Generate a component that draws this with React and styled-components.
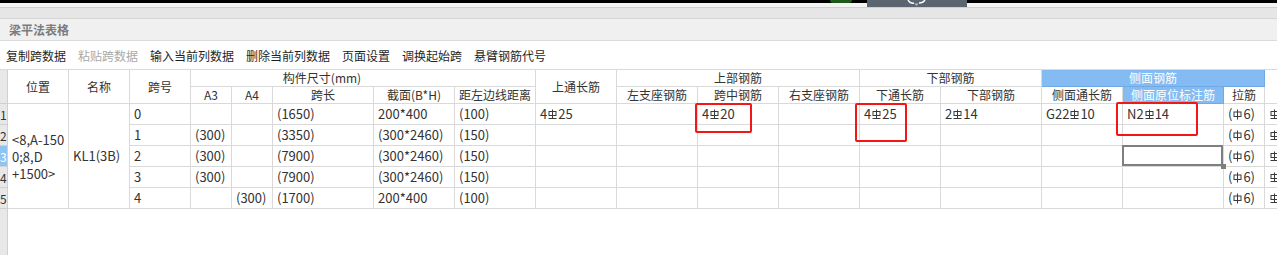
import React from "react";
import styled, { createGlobalStyle, css } from "styled-components";

//#region Styles
const GlobalStyle = createGlobalStyle`
  html, body {
    margin: 0;
    padding: 0;
    background: #fff;
  }
  body {
    font-family: "Noto Sans CJK SC", "Noto Sans", sans-serif;
    overflow: hidden;
  }
`;

const Page = styled.div`
  position: relative;
  width: 1277px;
  height: 255px;
  overflow: hidden;
  background: #fff;
`;

const TopStrip = styled.div`
  height: 7px;
  display: flex;
  align-items: flex-start;
  background: #f4f4f4;
  box-shadow: inset 0 3px 0 #000;
`;

const GreenBlob = styled.div`
  margin-left: 830px;
  width: 22px;
  height: 3px;
  background: #1c5a1c;
  border-radius: 0 0 6px 6px;
`;

const DarkTab = styled.div`
  margin-left: 15px;
  width: 100px;
  height: 7px;
  background: #5b6570;
  display: flex;
  justify-content: center;
`;

const TabBand = styled.div`
  height: 10px;
  background: #e6e6e6;
  border-top: 1px solid #cfcfcf;
  border-bottom: 1px solid #d6d6d6;
`;

const TitleBar = styled.div`
  height: 21px;
  line-height: 21px;
  padding-left: 9px;
  background: #f0f0f0;
  border-bottom: 1px solid #dadada;
  font-size: 12px;
  font-weight: 700;
  color: #7c7c7c;
`;

const Toolbar = styled.div`
  height: 28px;
  display: flex;
  align-items: center;
  gap: 12px;
  padding-left: 6px;
  font-size: 12px;
  color: #1f1f1f;
`;

const ToolItem = styled.span`
  color: ${(p) => (p.$disabled ? "#a9a9a9" : "#1f1f1f")};
`;

const TableArea = styled.div`
  height: 186px;
  background: linear-gradient(
    to right,
    #e8e8e8 0,
    #e8e8e8 7px,
    #d0d0d0 7px,
    #d0d0d0 8px,
    #fff 8px
  );
`;

const Grid = styled.div`
  display: grid;
  grid-template-columns:
    8px 61px 61px 61px 41px 41px 101px 81px 81px 81px 81px 81px
    81px 81px 101px 81px 101px 41px 60px;
  grid-template-rows: 17px 17px repeat(5, 21px);
  width: max-content;
  border-top: 1px solid #d9d9d9;
  background: #fff;
`;

const Cell = styled.div`
  position: relative;
  box-sizing: border-box;
  display: flex;
  align-items: center;
  justify-content: flex-start;
  padding: 0 4px;
  border-right: 1px solid #d9d9d9;
  border-bottom: 1px solid #d9d9d9;
  font-size: 13px;
  line-height: 16px;
  color: #333;
  white-space: nowrap;
  grid-column: span ${(p) => p.$cols || 1};
  grid-row: span ${(p) => p.$rows || 1};
  ${(p) =>
    p.$selected &&
    css`
      &::after {
        content: "";
        position: absolute;
        left: -1px;
        top: -1px;
        right: 0;
        bottom: 0;
        border: 2px solid #7f7f7f;
      }
      &::before {
        content: "";
        position: absolute;
        right: -3px;
        bottom: -3px;
        width: 5px;
        height: 5px;
        background: #7f7f7f;
        z-index: 1;
      }
    `}
`;

const HeadCell = styled(Cell)`
  justify-content: center;
  padding: 0 ${(p) => p.$shift || 0}px 0 0;
  font-size: 12px;
  ${(p) =>
    p.$blue &&
    css`
      background: #83bbf2;
      color: #fff;
      border-right-color: #6fa9e6;
      border-bottom-color: #6fa9e6;
    `}
`;

const ClipCell = styled(Cell)`
  overflow: hidden;
`;

const WrapCell = styled(Cell)`
  padding-left: 4px;
  padding-right: 0;
  line-height: 17px;
`;

const GutterCell = styled.div`
  box-sizing: border-box;
  display: flex;
  align-items: center;
  overflow: hidden;
  background: ${(p) => (p.$active ? "#8fc4f1" : "#e8e8e8")};
  color: ${(p) => (p.$active ? "#fff" : "#333")};
  border-right: 1px solid #d0d0d0;
  border-bottom: 1px solid #d0d0d0;
  font-size: 12px;
  padding-left: 0;
  grid-row: span ${(p) => p.$rows || 1};
`;

const RedMark = styled.div`
  position: absolute;
  left: ${(p) => p.$x}px;
  top: ${(p) => p.$y}px;
  width: ${(p) => p.$w}px;
  height: ${(p) => p.$h}px;
  box-sizing: border-box;
  border: 2px solid #f31616;
  border-radius: 2px;
  pointer-events: none;
`;

const Mark = styled.svg`
  width: 9px;
  height: 11px;
  margin: 0 1px;
  vertical-align: -1px;
  flex-shrink: 0;
`;
//#endregion Styles

function RebarMark({ grade }) {
  return (
    <Mark viewBox="0 0 9 11" fill="none" stroke="#3a3a3a" strokeWidth="1">
      {grade === 3 ? (
        <>
          <path d="M4.5 0.5 V9.5" />
          <rect x="1" y="2.5" width="7" height="4" />
          <path d="M0.5 9.5 H8.5" />
        </>
      ) : (
        <>
          <path d="M4.5 0.5 V10.5" />
          <rect x="1" y="3" width="7" height="4.5" />
        </>
      )}
    </Mark>
  );
}

const Bar = ({ pre = "", grade = 3, d = "" }) => (
  <span>
    {pre}
    <RebarMark grade={grade} />
    {d}
  </span>
);

const tie = (
  <span>
    (<RebarMark grade={1} />
    6)
  </span>
);
const ext = <RebarMark grade={3} />;

const rows = [
  ["0", "", "", "(1650)", "200*400", "(100)", <Bar pre="4" d="25" />, "", <Bar pre="4" d="20" />, "", <Bar pre="4" d="25" />, <Bar pre="2" d="14" />, <Bar pre="G22" d="10" />, <Bar pre="N2" d="14" />, tie, ext],
  ["1", "(300)", "", "(3350)", "(300*2460)", "(150)", "", "", "", "", "", "", "", "", tie, ext],
  ["2", "(300)", "", "(7900)", "(300*2460)", "(150)", "", "", "", "", "", "", "", "", tie, ext],
  ["3", "(300)", "", "(7900)", "(300*2460)", "(150)", "", "", "", "", "", "", "", "", tie, ext],
  ["4", "", "(300)", "(1700)", "200*400", "(100)", "", "", "", "", "", "", "", "", tie, ext],
];

const subHeads = [
  "A3",
  "A4",
  "跨长",
  "截面(B*H)",
  "距左边线距离",
  "左支座钢筋",
  "跨中钢筋",
  "右支座钢筋",
  "下通长筋",
  "下部钢筋",
  "侧面通长筋",
  "侧面原位标注筋",
  "拉筋",
];

const tools = [
  { label: "复制跨数据" },
  { label: "粘贴跨数据", disabled: true },
  { label: "输入当前列数据" },
  { label: "删除当前列数据" },
  { label: "页面设置" },
  { label: "调换起始跨" },
  { label: "悬臂钢筋代号" },
];

export default function App() {
  return (
    <>
      <GlobalStyle />
      <Page>
        <TopStrip>
          <GreenBlob />
          <DarkTab>
            <svg width="22" height="7" viewBox="0 0 22 7" fill="none">
              <path d="M2 0 Q4 4 8 3" stroke="#fff" strokeWidth="1.4" />
              <path d="M13 3 Q17 3 19 0" stroke="#fff" strokeWidth="1.4" />
              <path d="M8.5 3.5 H12.5 L10.5 6 Z" fill="#b9bec4" />
            </svg>
          </DarkTab>
        </TopStrip>
        <TabBand />
        <TitleBar>梁平法表格</TitleBar>
        <Toolbar>
          {tools.map((t) => (
            <ToolItem key={t.label} $disabled={t.disabled}>
              {t.label}
            </ToolItem>
          ))}
        </Toolbar>
        <TableArea>
          <Grid>
            <GutterCell $rows={2} />
            <HeadCell $rows={2}>位置</HeadCell>
            <HeadCell $rows={2}>名称</HeadCell>
            <HeadCell $rows={2}>跨号</HeadCell>
            <HeadCell $cols={5} $shift={82}>
              构件尺寸(mm)
            </HeadCell>
            <HeadCell $rows={2}>上通长筋</HeadCell>
            <HeadCell $cols={3}>上部钢筋</HeadCell>
            <HeadCell $cols={2}>下部钢筋</HeadCell>
            <HeadCell $cols={3} $blue>
              侧面钢筋
            </HeadCell>
            <HeadCell $rows={2} />
            {subHeads.map((h) => (
              <HeadCell key={h} $blue={h === "侧面原位标注筋"}>
                {h}
              </HeadCell>
            ))}

            {rows.map((row, i) => (
              <React.Fragment key={i}>
                <GutterCell $active={i === 2}>{i + 1}</GutterCell>
                {i === 0 && (
                  <>
                    <WrapCell $rows={5}>
                      <span>
                        &lt;8,A-150
                        <br />
                        0;8,D
                        <br />
                        +1500&gt;
                      </span>
                    </WrapCell>
                    <Cell $rows={5}>KL1(3B)</Cell>
                  </>
                )}
                {row.map((v, j) =>
                  j === row.length - 1 ? (
                    <ClipCell key={j}>{v}</ClipCell>
                  ) : (
                    <Cell key={j} $selected={i === 2 && j === 13}>
                      {v}
                    </Cell>
                  )
                )}
              </React.Fragment>
            ))}
          </Grid>
        </TableArea>
        <RedMark $x={695} $y={103} $w={57} $h={30} />
        <RedMark $x={855} $y={103} $w={52} $h={39} />
        <RedMark $x={1116} $y={102} $w={82} $h={34} />
      </Page>
    </>
  );
}
